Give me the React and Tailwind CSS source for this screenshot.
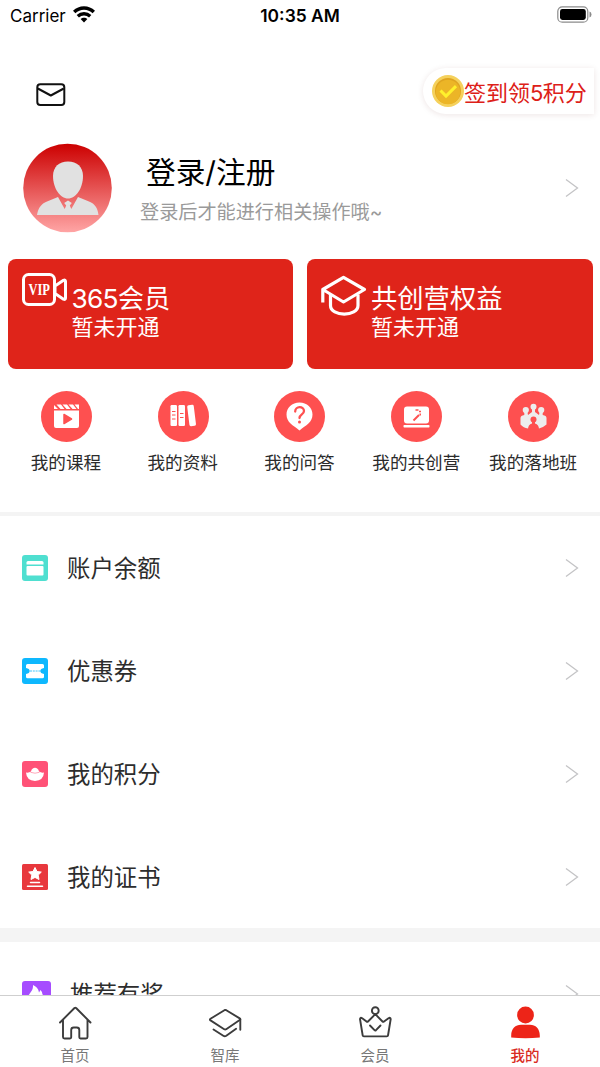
import React from 'react';

const Chevron = () => (
  <svg className="h-[22px] w-[14px] shrink-0" viewBox="0 0 14 22" fill="none" stroke="#c4c4c6" strokeWidth="1.3">
    <path d="M1 2.5 12.5 11 1 19.500" />
  </svg>
);

function StatusBar() {
  return (
    <div className="grid h-8 shrink-0 grid-cols-3 items-center pl-[10px] pr-[8px] text-[17px] text-black">
      <div className="flex items-center gap-[7px]">
        <span className="leading-8">Carrier</span>
        <svg className="-mt-[3px] h-[17px] w-[22px]" viewBox="0 0 22 17" fill="none" stroke="#000" strokeWidth="3.400">
          <path d="M1.200 6C6.700.6 15.300.6 20.800 6" />
          <path d="M4.800 10.200c3.500-3.200 8.900-3.200 12.400 0" />
          <path d="M11 16.500 7.600 13c1.900-1.800 4.900-1.800 6.800 0Z" fill="#000" stroke="none" />
        </svg>
      </div>
      <div className="-ml-[2px] whitespace-nowrap text-center text-[17.400px] font-semibold leading-8">10:35 AM</div>
      <svg className="-mt-[3px] h-[17px] w-[36px] justify-self-end" viewBox="0 0 36 17">
        <rect x="1.800" y=".8" width="30" height="15.400" rx="4.500" fill="none" stroke="#8b8b8b" strokeWidth="1.200" />
        <rect x="4" y="3" width="25.800" height="11" rx="2.400" fill="#000" />
        <path d="M33.500 5.500q2 .7 2 3t-2 3Z" fill="#8b8b8b" />
      </svg>
    </div>
  );
}

function Header() {
  return (
    <div className="mt-9 flex h-[46px] items-center justify-between pl-9 pr-[6px]">
      <svg className="mt-[7px] h-6 w-[30px]" viewBox="0 0 30 24" fill="none" stroke="#111" strokeWidth="2" strokeLinejoin="round">
        <rect x="1.300" y="1.200" width="27" height="20.800" rx="3" />
        <path d="M1.800 5.500 14.800 12.500 27.800 5.500" />
      </svg>
      <div className="flex h-[46px] w-[171px] items-center rounded-l-full bg-white pl-[9px] shadow-[0_1px_6px_rgba(90,20,20,0.11)]">
        <svg className="h-8 w-8 shrink-0" viewBox="0 0 32 32">
          <circle cx="16" cy="16" r="16" fill="#f5d15c" />
          <circle cx="16" cy="16" r="13" fill="#dfa421" />
          <circle cx="16" cy="17" r="12.200" fill="#ecb527" />
          <path d="m8.500 15.500 5.500 5.600 10-10" fill="none" stroke="#fff02c" strokeWidth="3" />
        </svg>
        <span className="mt-[4px] whitespace-nowrap text-[22px] leading-[42px] text-[#dd2018]">
          签到领<span className="tracking-[-0.030em]">5</span>积分
        </span>
      </div>
    </div>
  );
}

function Profile() {
  return (
    <div className="mt-[29px] flex h-[90px] items-start pl-[23px] pr-[21px]">
      <svg className="h-[90px] w-[89px] shrink-0" viewBox="0 -.5 89 90">
        <defs>
          <linearGradient id="avatar" x1="0" y1="0" x2="0" y2="1">
            <stop offset="0" stopColor="#cc0000" />
            <stop offset="1" stopColor="#ffa5a5" />
          </linearGradient>
        </defs>
        <circle cx="44.500" cy="44.500" r="44.300" fill="url(#avatar)" />
        <path d="M45 18c9 0 15 5.400 15 14.500 0 12-7 22.500-15 22.500s-15-10.500-15-22.500C30 23.400 36 18 45 18Z" fill="#e1e1e1" />
        <path d="M14 71.500c1.500-7.500 4-11 10-13.500l11-4.500 6.700 12 1.500-3.500-2-2.500L45 57l3.800 2.500-2 2.500 1.500 3.500 6.700-12L66 58c6 2.500 8.500 6 9.500 13.500Z" fill="#e1e1e1" />
      </svg>
      <div className="ml-7 flex-1 pt-[1px]">
        <div className="ml-[6px] h-[56px] text-[29.700px] leading-[56px] text-black">登录/注册</div>
        <div className="h-6 text-[19.150px] leading-6 text-[#9a9a9a]">登录后才能进行相关操作哦~</div>
      </div>
      <div className="self-center">
        <Chevron />
      </div>
    </div>
  );
}

const VipIcon = () => (
  <svg className="h-[34px] w-[46px]" viewBox="0 0 46 34" fill="none" stroke="#fff" strokeWidth="3" strokeLinejoin="round">
    <rect x="1.500" y="1.500" width="31" height="30" rx="5" />
    <path d="m33 13 8.500-5.700q2-.8 2 1.200v16.500q0 2-2 1.200L33 20.500Z" />
    <text x="17.200" y="22" textAnchor="middle" textLength="21.500" lengthAdjust="spacingAndGlyphs" fill="#fff" stroke="none" className="font-['Liberation_Serif',serif] text-[16.500px] font-bold">VIP</text>
  </svg>
);

const CapIcon = () => (
  <svg className="h-[42px] w-[46px]" viewBox="0 0 46 42" fill="none" stroke="#fff" strokeWidth="3.200" strokeLinejoin="round">
    <path d="M1.800 27.500V14.500L22.500 2.300l21 12.200L22.500 27 1.800 14.500" />
    <path d="M9.500 19.500v11c0 11.500 27.500 11.500 27.500 0v-11" />
  </svg>
);

function MemberCard({ icon, title }) {
  return (
    <div className="flex h-[110px] flex-1 gap-1 rounded-lg bg-[#df241a] pl-[14px] text-white">
      <div className="w-[46px] pt-[14px]">{icon}</div>
      <div className="pt-[25px]">
        <div className="h-[29px] text-[26.300px] leading-[30px]">{title}</div>
        <div className="h-[29px] text-[22px] leading-[29px]">暂未开通</div>
      </div>
    </div>
  );
}

const shortcuts = [
  {
    label: '我的课程',
    icon: (
      <>
        <path d="M13 19.500h25V35a2 2 0 0 1-2 2H15a2 2 0 0 1-2-2Z" fill="#fff" />
        <path d="m13 14 4 4h-4Zm2.500-.5H20l3.500 4.500h-4Zm6 0H26l3.500 4.500h-4Zm6 0H32l3.500 4.500h-4Zm6 0H38V18h-1Z" fill="#fff" />
        <path d="m23 23.500 7.500 4.500-7.500 4.500Z" fill="#fe5050" stroke="#fe5050" strokeWidth="1.500" strokeLinejoin="round" />
      </>
    ),
  },
  {
    label: '我的资料',
    icon: (
      <>
        <rect x="12.500" y="14" width="6.500" height="21" rx="1.200" fill="#fff" />
        <rect x="20.500" y="14" width="6.500" height="21" rx="1.200" fill="#fff" />
        <rect x="30.300" y="14" width="6.600" height="21" rx="1.500" fill="#fff" transform="rotate(-7 33.500 24.500)" />
        <path d="M14 20.500h3.500M14 24h3.500M14 28h3.500M22 22.500h3.500M22 26.500h3.500" stroke="#fe5050" strokeWidth="1.200" />
      </>
    ),
  },
  {
    label: '我的问答',
    icon: (
      <>
        <path d="M25.500 11.500c7.500 0 13 5 13 12 0 8-6.500 10.500-13 16-6.500-5.500-13-8-13-16 0-7 5.500-12 13-12Z" fill="#fff" />
        <path d="M21.200 20.500c0-5.700 8.800-5.700 8.800-.5 0 3.500-4.500 3.200-4.500 7" fill="none" stroke="#fe5050" strokeWidth="2.300" strokeLinecap="round" />
        <circle cx="25.500" cy="31" r="1.500" fill="#fe5050" />
      </>
    ),
  },
  {
    label: '我的共创营',
    icon: (
      <>
        <rect x="13" y="15.500" width="25" height="17" rx="3" fill="#fff" />
        <rect x="12.500" y="34" width="26" height="2.500" rx=".7" fill="#fff" />
        <path d="m22.500 29.500 5.500-5.500" stroke="#fe5050" strokeWidth="2" />
        <path d="M24.500 19h3M28 20.500h2M29.200 22.500v2" stroke="#fe5050" strokeWidth="1.500" />
      </>
    ),
  },
  {
    label: '我的落地班',
    icon: (
      <>
        <g fill="#ededed">
          <circle cx="25.500" cy="15.800" r="3" />
          <circle cx="17.800" cy="19" r="3.100" />
          <circle cx="33.200" cy="19" r="3.100" />
          <path d="M24 17h3v4l4 3 .7-3.500h3V24q3.800.5 3.800 3v6.500q-4 3.500-7.500 4h-11q-4.500-.5-7.500-4V27q0-2.500 3.800-3v-3.500h3L20 24l4-3Z" />
        </g>
        <circle cx="25.500" cy="28.500" r="3" fill="#fe5050" />
        <path d="M20 38.500q0-5 4-6v-2h3v2q4 1 4 6Z" fill="#fe5050" />
      </>
    ),
  },
];

const menuItems = [
  {
    label: '账户余额',
    icon: (
      <>
        <rect width="26" height="26" rx="3" fill="#4fdfd0" />
        <path d="M6 6h14q1.500 0 1.500 1.500v2h-17v-2Q4.500 6 6 6Z" fill="#fff" />
        <rect x="4.500" y="11" width="17" height="9.500" rx="1" fill="#fff" />
      </>
    ),
  },
  {
    label: '优惠券',
    icon: (
      <>
        <rect width="26" height="26" rx="3" fill="#0eb8fe" />
        <path d="M5.500 6h15Q22 6 22 7.500V10q-3.700.7-3.700 3t3.700 3v2.700q0 1.500-1.500 1.500h-15Q4 20.200 4 18.700V16q3.700-.7 3.700-3T4 10V7.500Q4 6 5.500 6Z" fill="#fff" />
        <path d="M8 13h10.500" stroke="#0eb8fe" strokeWidth=".8" strokeDasharray="2 .8" />
      </>
    ),
  },
  {
    label: '我的积分',
    icon: (
      <>
        <rect width="26" height="26" rx="3" fill="#ff5277" />
        <path d="M4 11.500Q7 12 9 10.500c1-5 7-5 8 0q2 1.500 5 1-.5 8-9 8.500-8.500-.5-9-8.500Z" fill="#fff" />
        <path d="M8.500 11.300q4.500 1.800 9 0" fill="none" stroke="#ff5277" strokeWidth=".5" />
      </>
    ),
  },
  {
    label: '我的证书',
    icon: (
      <>
        <rect width="26" height="26" rx="1.500" fill="#e8383d" />
        <path d="m13 3.500 2 4 4.300.6-3.100 3 .8 4.400-4-2.100-4 2.100.8-4.400-3.100-3L11 7.500Z" fill="#fff" stroke="#fff" strokeWidth="1" strokeLinejoin="round" />
        <path d="M8.500 18.500h9M5.500 22.300h15" stroke="#fff" strokeWidth="1.500" strokeLinecap="round" />
      </>
    ),
  },
];

function MenuRow({ item }) {
  return (
    <div className="flex h-[103px] items-center pl-[22px] pr-[21px]">
      <svg className="h-[26px] w-[26px] shrink-0" viewBox="0 0 26 26">{item.icon}</svg>
      <span className="ml-[19px] flex-1 pt-[2px] text-[23.400px] leading-8 text-[#2d2d2d]">{item.label}</span>
      <Chevron />
    </div>
  );
}

const tabs = [
  {
    label: '首页',
    icon: (
      <path d="M2 17.500 16.500 3q.8-.6 1.600 0L32.500 17.500M5 15v17q0 1.500 1.500 1.500H12q1.200 0 1.200-1.200V25q0-2.500 2.500-2.500h3.100q2.500 0 2.500 2.500v7.300q0 1.200 1.200 1.200H28q1.500 0 1.500-1.500V15" />
    ),
  },
  {
    label: '智库',
    icon: (
      <>
        <path d="M16.400 5.200 2.500 13.700q-1.300.8 0 1.700l13.700 8.800q1 .6 2 0L31.700 15q1.300-.8 0-1.600L18.300 5.200q-1-.5-1.900 0Z" />
        <path d="M32.300 14.500v10.300M5.500 24.500l9.800 6.300q1.500 1 3 0l9.800-7" />
      </>
    ),
  },
  {
    label: '会员',
    icon: (
      <>
        <circle cx="17.300" cy="5.700" r="3.400" />
        <path d="M17.300 9.200 10 16.500q-.7.700-1.500 0l-4.300-3.300q-2-1.200-2.200.8l2.700 16.500q.1.900 1.200.9h22.800q1.200 0 1.300-.9L32.700 14q-.2-2-2.200-.8L26 16.500q-.8.700-1.500 0Z" />
        <path d="m12 20.500 4.500 4.700q.7.700 1.500 0l4.500-4.700" />
      </>
    ),
  },
  {
    label: '我的',
    active: true,
    icon: (
      <g fill="#ed2418" stroke="none">
        <circle cx="17.500" cy="10" r="8.400" />
        <path d="M3.200 32.500v-2c0-7 4.300-10.800 9.800-10.800h9c5.500 0 9.800 3.800 9.800 10.800v2q-14.300 1.500-28.600 0Z" />
      </g>
    ),
  },
];

export default function App() {
  return (
    <div lang="zh-CN" className="flex h-[1067px] w-[600px] flex-col overflow-hidden bg-white font-['Inter','Noto_Sans_CJK_SC',sans-serif]">
      <StatusBar />
      <main className="min-h-0 flex-1 overflow-hidden">
        <Header />
        <Profile />
        <div className="mt-[26px] flex gap-[14px] px-[7.500px]">
          <MemberCard title={<><span className="tracking-[-0.030em]">365</span>会员</>} icon={<VipIcon />} />
          <MemberCard title="共创营权益" icon={<div className="pt-[2px]"><CapIcon /></div>} />
        </div>
        <div className="mt-[22px] grid h-[121px] grid-cols-5 px-[8px]">
          {shortcuts.map((item) => (
            <div key={item.label} className="flex flex-col items-center">
              <svg className="h-[51px] w-[51px]" viewBox="0 0 51 51">
                <circle cx="25.500" cy="25.500" r="25.500" fill="#fe5050" />
                {item.icon}
              </svg>
              <span className="-ml-[1px] mt-[9px] whitespace-nowrap text-[17.600px] leading-6 text-[#2b2b2b]">{item.label}</span>
            </div>
          ))}
        </div>
        <div className="h-1 bg-[#f4f4f4]" />
        {menuItems.map((item) => <MenuRow key={item.label} item={item} />)}
        <div className="h-[14px] bg-[#f4f4f4]" />
        <div className="flex items-start pl-[22px] pr-[21px] pt-[37px]">
          <svg className="mt-[2px] h-[29px] w-[29px]" viewBox="0 0 29 29">
            <rect width="29" height="29" rx="3" fill="#a64cff" />
            <path d="M5.500 18c0-5 6-7 5.500-14 3 1.500 5.500 3.500 6 7.500l1.500-2.500q2 2 2 4.500 3 2 2.500 6.500-2 5-8 5-8.500 0-9.500-7Z" fill="#fff" />
          </svg>
          <span className="ml-[19px] flex-1 text-[23.400px] leading-8 text-[#2d2d2d]">推荐有奖</span>
          <div className="pt-[4px]"><Chevron /></div>
        </div>
      </main>
      <nav className="grid h-[72px] shrink-0 grid-cols-4 border-t border-[#cfcfcf] bg-white">
        {tabs.map((tab) => (
          <div key={tab.label} className={tab.active ? 'flex flex-col items-center pt-[9px] font-medium text-[#d92b22]' : 'flex flex-col items-center pt-[9px] text-[#777]'}>
            <svg className="h-[36px] w-[35px]" viewBox="0 0 35 36" fill="none" stroke="#3c3c3c" strokeWidth="1.900" strokeLinecap="round" strokeLinejoin="round">{tab.icon}</svg>
            <span className="mt-[5px] text-[14.500px] leading-5">{tab.label}</span>
          </div>
        ))}
      </nav>
    </div>
  );
}
